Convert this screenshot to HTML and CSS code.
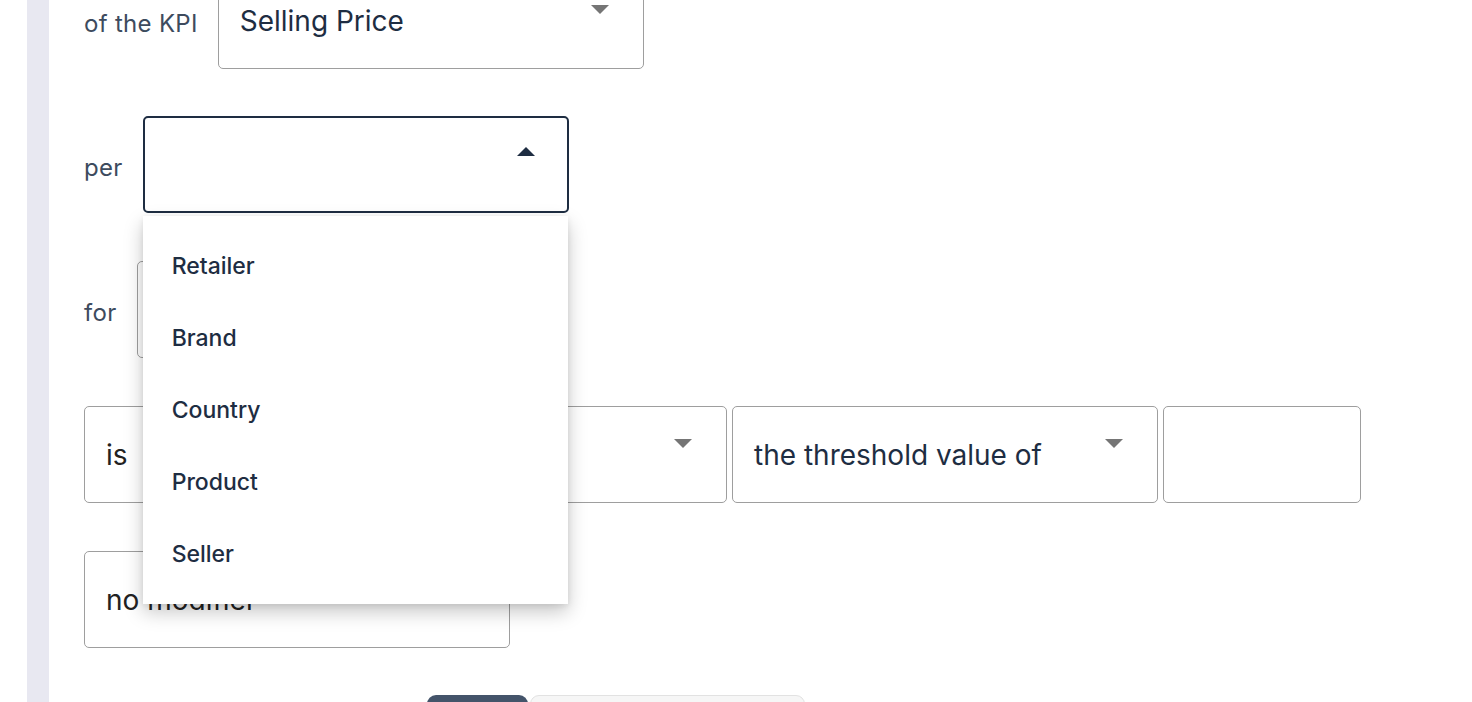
FILE: index.html
```html
<!DOCTYPE html>
<html>
<head>
<meta charset="utf-8">
<link rel="stylesheet" href="styles.css">
</head>
<body>
<div class="page">
  <div class="strip"></div>
  <div class="content">
    <div class="row first">
      <span class="label">of the KPI</span>
      <div class="box select"><span class="value">Selling Price</span><span class="arrow down"></span></div>
    </div>
    <div class="row">
      <span class="label">per</span>
      <div class="anchor">
        <div class="box select focused"><span class="arrow up"></span></div>
        <ul class="menu">
          <li>Retailer</li>
          <li>Brand</li>
          <li>Country</li>
          <li>Product</li>
          <li>Seller</li>
        </ul>
      </div>
    </div>
    <div class="row">
      <span class="label">for</span>
      <div class="box select"></div>
    </div>
    <div class="row row-tight">
      <div class="box small"><span class="value dark">is</span></div>
      <div class="box select"><span class="arrow down"></span></div>
      <div class="box select"><span class="value">the threshold value of</span><span class="arrow down"></span></div>
      <div class="box num"></div>
    </div>
    <div class="row">
      <div class="box select"><span class="value dark">no modifier</span></div>
    </div>
    <div class="buttons">
      <div class="btn primary"></div>
      <div class="btn secondary"></div>
    </div>
  </div>
</div>
</body>
</html>
```
FILE: styles.css
```css
* { box-sizing: border-box; }
html, body { margin: 0; padding: 0; background: #fff; overflow: hidden; }
body { font-family: Inter, "Noto Sans", sans-serif; color: #1e2d42; }
.page { display: flex; min-height: 702px; padding-left: 27px; }
.strip { width: 22px; background: #e8e8f1; flex: none; min-height: 760px; }
.content { flex: 1; padding-left: 35px; margin-top: -28px; display: flex; flex-direction: column; gap: 48px; }
.row { display: flex; align-items: center; gap: 20px; height: 97px; }
.row.first { margin-bottom: -1px; }
.row-tight { gap: 5px; }
.label { font-size: 24px; color: #3d4b5e; padding-top: 5px; letter-spacing: 0.3px; }
.anchor { position: relative; }
.box { position: relative; height: 97px; border: 1px solid #9e9e9e; border-radius: 5px; background: #fff; display: flex; align-items: center; padding-left: 21px; padding-top: 1px; }
.select { width: 426px; }
.small { width: 212px; }
.num { width: 198px; }
.focused { border: 2px solid #1e2d42; padding-left: 20px; }
.value { font-size: 28px; color: #1e2d42; }
.value.dark { color: #222; }
.arrow { position: absolute; right: 34px; top: 32px; width: 0; height: 0; border-left: 9px solid transparent; border-right: 9px solid transparent; }
.arrow.down { border-top: 9px solid #757575; }
.arrow.up { border-bottom: 9px solid #1e2d42; top: 29px; right: 32px; }
.menu { position: absolute; left: 0; top: 100px; width: 425px; margin: 0; padding: 14px 0; list-style: none; background: #fff; box-shadow: 0 8px 18px rgba(0,0,0,0.22), 0 2px 6px rgba(0,0,0,0.08); z-index: 10; }
.menu li { height: 72px; display: flex; align-items: center; padding-left: 29px; font-size: 23px; font-weight: 500; color: #1e2d42; }
.buttons { display: flex; gap: 2px; padding-left: 343px; margin-top: -1px; }
.btn { height: 40px; border-radius: 9px; }
.primary { width: 101px; background: #44546a; }
.secondary { width: 275px; background: #f6f6f6; border: 1px solid #e2e2e2; }
```
